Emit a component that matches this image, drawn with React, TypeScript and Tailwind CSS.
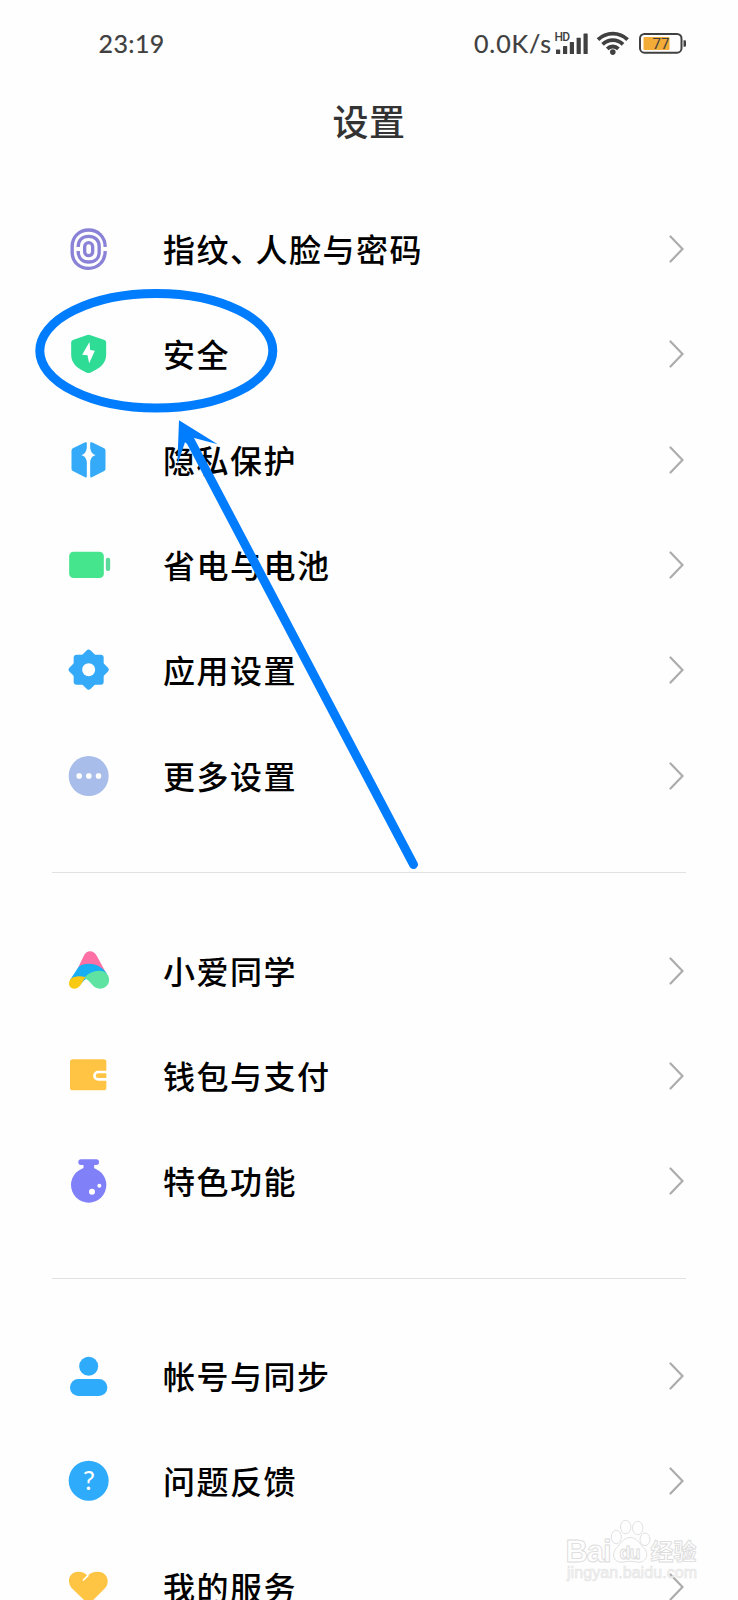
import type { ReactNode } from 'react';

type Item = { label: ReactNode; icon: ReactNode };

function Icon({ children }: { children: ReactNode }) {
  return (
    <svg viewBox="-73.5 -72 144 144" className="h-12 w-12 shrink-0">
      {children}
    </svg>
  );
}

const FingerprintIcon = () => (
  <Icon>
    <g fill="none" stroke="#8a82d6" strokeWidth="10">
      <path d="M50 -6 C50 -37 28 -57 0.5 -57 C-28 -57 -49 -36 -49 -8 V10 C-49 38 -28 58 0.5 58 C28 58 50 38 50 6" />
      <path d="M-31 -6 C-31 -27 -17 -38 0.5 -38 C19 -38 32 -26 32 -8 V10 C32 28 19 39 0.5 39 C-17 39 -31 28 -31 6" />
      <rect x="-11.5" y="-19" width="24" height="39" rx="12" />
    </g>
  </Icon>
);

const ShieldIcon = () => (
  <Icon>
    <path
      fill="#2edc96"
      d="M-4 -57 Q0 -59 4 -57 L48 -42 Q53 -40 53 -35 V2 C53 28 34 43 5 56 Q0 58 -5 56 C-34 43 -52 28 -52 2 V-35 Q-52 -40 -47 -42 Z"
    />
    <path fill="#fff" d="M3 -36 L-19 2 L-3 4 L2 28 L19 -10 L5 -12 Z" />
  </Icon>
);

const PrivacyIcon = () => (
  <Icon>
    <path
      fill="#35aaf8"
      d="M-10 -53 Q-5 -55 -5 -50 V-37 C-7 -23 -12 -18 -22 -15 C-12 -12 -7 -7 -5 6 V48 Q-5 54 -10 52 L-47 33 Q-51 31 -51 26 V-28 Q-51 -33 -47 -35 Z"
    />
    <path
      fill="#35aaf8"
      d="M10 -53 Q5 -55 5 -50 V-37 C7 -23 12 -18 22 -15 C12 -12 7 -7 5 6 V48 Q5 54 10 52 L47 33 Q51 31 51 26 V-28 Q51 -33 47 -35 Z"
    />
  </Icon>
);

const BatteryIcon = () => (
  <Icon>
    <rect x="-58" y="-40" width="104" height="79" rx="13" fill="#45e58d" />
    <rect x="52" y="-22" width="13" height="40" rx="6" fill="#5dd99b" />
  </Icon>
);

const GearIcon = () => (
  <Icon>
    <g fill="#35aaf8">
      <rect x="-44.5" y="-46" width="90" height="90" rx="9" />
      <rect x="-44.5" y="-46" width="90" height="90" rx="9" transform="rotate(45 0.5 -1)" />
    </g>
    <circle cx="0.5" cy="-1" r="19.5" fill="#fff" />
  </Icon>
);

const MoreIcon = () => (
  <Icon>
    <circle cx="0.5" cy="0" r="60" fill="#a8bdea" />
    <g fill="#fff">
      <rect x="-36" y="-8" width="16" height="16" rx="6" />
      <rect x="-7" y="-8" width="16" height="16" rx="6" />
      <rect x="22" y="-8" width="16" height="16" rx="6" />
    </g>
  </Icon>
);

const AssistantIcon = () => (
  <Icon>
    <g transform="translate(-115.5 -121)">
      <path fill="#fc70a5" d="M80 120 L100 78 C109 57 131 57 141 77 L171 132 Z" />
      <path
        fill="#17aef4"
        d="M86 108 C105 94 148 94 171 129 L135 134 L106 146 L90 162 H60 L60 148 Z"
      />
      <path
        fill="#5fe3a3"
        d="M104 142 C116 122 156 112 171 130 C186 150 173 174 150 174 C128 174 124 152 104 142 Z"
      />
      <path
        fill="#fac913"
        d="M60 147 C70 136 92 135 107 140 C98 148 92 174 74 174 C56 174 54 158 60 147 Z"
      />
    </g>
  </Icon>
);

const WalletIcon = () => (
  <Icon>
    <rect x="-55.5" y="-50" width="109" height="93" rx="8" fill="#ffc444" />
    <path d="M56 -12 H29 a11 11 0 0 0 0 22 H56" fill="none" stroke="#fff" strokeWidth="8" />
  </Icon>
);

const FlaskIcon = () => (
  <Icon>
    <g fill="#8080f8">
      <rect x="-30.5" y="-65" width="62" height="17" rx="8" />
      <rect x="-15" y="-54" width="32" height="30" />
      <circle cx="0.5" cy="12" r="53" />
    </g>
    <circle cx="10.5" cy="32" r="9" fill="#fff" />
    <circle cx="32.5" cy="14" r="6" fill="#fff" />
  </Icon>
);

const AccountIcon = () => (
  <Icon>
    <circle cx="0.5" cy="-29" r="28.5" fill="#2fabfb" />
    <rect x="-55.5" y="9" width="112" height="51" rx="25" fill="#2fabfb" />
  </Icon>
);

const HelpIcon = () => (
  <Icon>
    <circle cx="0.5" cy="-1" r="60" fill="#2fabfb" />
    <text x="1" y="27" textAnchor="middle" fontSize="80" fontFamily="Lato, sans-serif" fill="#fff">
      ?
    </text>
  </Icon>
);

const HeartIcon = () => (
  <Icon>
    <path
      fill="#fec545"
      d="M-50 4 C-68 -18 -56 -46 -31 -46 C-18 -46 -10 -42 -3 -34 C6 -42 14 -46 28 -46 C56 -46 66 -16 50 3 L9 44 Q0 51 -8 44 Z"
    />
    <path d="M-2 -34 L-15 -21" stroke="#fff" strokeWidth="5" strokeLinecap="round" />
  </Icon>
);

const groups: Item[][] = [
  [
    {
      label: (
        <>
          指纹<span className="-mr-2">、</span>人脸与密码
        </>
      ),
      icon: <FingerprintIcon />,
    },
    { label: '安全', icon: <ShieldIcon /> },
    { label: '隐私保护', icon: <PrivacyIcon /> },
    { label: '省电与电池', icon: <BatteryIcon /> },
    { label: '应用设置', icon: <GearIcon /> },
    { label: '更多设置', icon: <MoreIcon /> },
  ],
  [
    { label: '小爱同学', icon: <AssistantIcon /> },
    { label: '钱包与支付', icon: <WalletIcon /> },
    { label: '特色功能', icon: <FlaskIcon /> },
  ],
  [
    { label: '帐号与同步', icon: <AccountIcon /> },
    { label: '问题反馈', icon: <HelpIcon /> },
    { label: '我的服务', icon: <HeartIcon /> },
  ],
];

function StatusBar() {
  return (
    <div className="flex h-[88px] items-center justify-between pr-[50px] pl-[98.5px] font-[Lato] text-[25px] text-[#404040] [-webkit-text-stroke:0.2px_#404040]">
      <span className="tracking-[0.4px]">23:19</span>
      <div className="flex items-center">
        <span className="tracking-[0.9px]">0.0K/s</span>
        <svg viewBox="0 0 136 50" className="h-[50px] w-[136px]" fill="#404040" strokeWidth="0">
          <text x="2.5" y="22" fontSize="12" fontWeight="500" fontFamily="Roboto, sans-serif" textLength="15.5" stroke="none">
            HD
          </text>
          <rect x="4" y="30.5" width="4.2" height="4.5" rx="0.5" />
          <rect x="11" y="27" width="4.2" height="8" rx="0.5" />
          <rect x="17.8" y="23" width="4.2" height="12" rx="0.5" />
          <rect x="24.6" y="18.8" width="4.2" height="16.2" rx="0.5" />
          <rect x="31.5" y="14.5" width="4.2" height="20.5" rx="0.5" />
          <g fill="none" stroke="#404040" strokeWidth="3.8">
            <path d="M46 20.7 a21 21 0 0 1 29.6 0" />
            <path d="M50.6 25.3 a14.4 14.4 0 0 1 20.4 0" />
            <path d="M55.2 29.8 a8 8 0 0 1 11.2 0" />
          </g>
          <circle cx="60.8" cy="33.1" r="2.8" />
          <rect x="88" y="15" width="41.5" height="18.7" rx="4.5" fill="none" stroke="#404040" strokeWidth="2" />
          <rect x="91.5" y="18" width="26" height="13" rx="1" fill="#f3ac38" />
          <path d="M131.5 21.2 h1.2 q1.3 0 1.3 1.3 v4 q0 1.3 -1.3 1.3 h-1.2 z" />
          <text x="100.5" y="30" fontSize="15" fontFamily="Roboto, sans-serif" stroke="none">
            77
          </text>
        </svg>
      </div>
    </div>
  );
}

function Row({ label, icon }: Item) {
  return (
    <li className="flex h-[105.33px] items-center pr-[54px] pl-16">
      {icon}
      <span className="ml-[51px] flex-1 pb-0.5 text-[32px] font-medium tracking-[1.5px] text-black">{label}</span>
      <svg viewBox="0 0 15 28" className="h-7 w-[15px]" fill="none" stroke="#acacac" strokeWidth="2.2" strokeLinecap="round">
        <path d="M1.5 1.5 L13.5 14 L1.5 26.5" />
      </svg>
    </li>
  );
}

// Blue ellipse and arrow drawn over the list
function Annotation() {
  return (
    <svg viewBox="0 0 738 1600" className="pointer-events-none absolute top-0 left-0 h-[1600px] w-[738px]">
      <ellipse cx="156.3" cy="350.8" rx="116.5" ry="57.3" fill="none" stroke="#007dff" strokeWidth="9" />
      <path d="M189.5 439 L413.5 864.5" stroke="#007dff" strokeWidth="9" strokeLinecap="round" />
      <path d="M179 420.3 L217.7 444.3 L193.3 437.7 L190 446 L185 442.3 L177.3 465 Z" fill="#007dff" />
    </svg>
  );
}

function Watermark() {
  return (
    <svg
      viewBox="0 0 198 100"
      className="pointer-events-none absolute top-[1500px] left-[540px] h-[100px] w-[198px]"
      fill="#fefefe"
      stroke="#dcdcdc"
      strokeWidth="0.9"
    >
      <text x="25.5" y="61.5" fontSize="31" fontWeight="700" fontFamily="Liberation Sans, sans-serif" textLength="46">
        Bai
      </text>
      <ellipse cx="76.3" cy="37" rx="5" ry="6.7" />
      <ellipse cx="85.7" cy="27" rx="5.2" ry="6.7" />
      <ellipse cx="97.7" cy="28" rx="5.2" ry="6.7" />
      <ellipse cx="105" cy="39.3" rx="5" ry="6.3" />
      <path d="M90 37.5 C97 37.5 99 43 103.5 47.5 C110 54 106 62.5 98.5 62.3 C92 61 88 61 82 62.3 C74 62.5 71 55 76 48.5 C81 43 84 37.5 90 37.5 Z" />
      <text x="79.5" y="58.5" fontSize="18" fontWeight="700" fontFamily="Liberation Sans, sans-serif" textLength="21">
        du
      </text>
      <text x="110.5" y="60" fontSize="23" fontWeight="700" fontFamily="Noto Sans CJK SC, sans-serif" textLength="46">
        经验
      </text>
      <text
        x="27"
        y="78"
        fontSize="16"
        fontFamily="Liberation Sans, sans-serif"
        textLength="130"
        fill="#f4f4f4"
        stroke="#e4e4e4"
        strokeWidth="0.6"
      >
        jingyan.baidu.com
      </text>
    </svg>
  );
}

export default function App() {
  return (
    <main className="relative h-[1600px] w-[738px] overflow-hidden bg-[#fefefe] font-['Noto_Sans_CJK_SC',sans-serif]">
      <StatusBar />
      <h1 className="flex h-[108.5px] justify-center pt-[7px] text-[36px] leading-[50px] font-medium tracking-[0.5px] text-[#333]">
        设置
      </h1>
      {groups.map((items, i) => (
        <section key={i}>
          {i > 0 && <hr className="mx-[52px] mt-[44px] mb-[44.5px] border-[#e2e2e2]" />}
          <ul>
            {items.map((item, j) => (
              <Row key={j} {...item} />
            ))}
          </ul>
        </section>
      ))}
      <Watermark />
      <Annotation />
    </main>
  );
}
